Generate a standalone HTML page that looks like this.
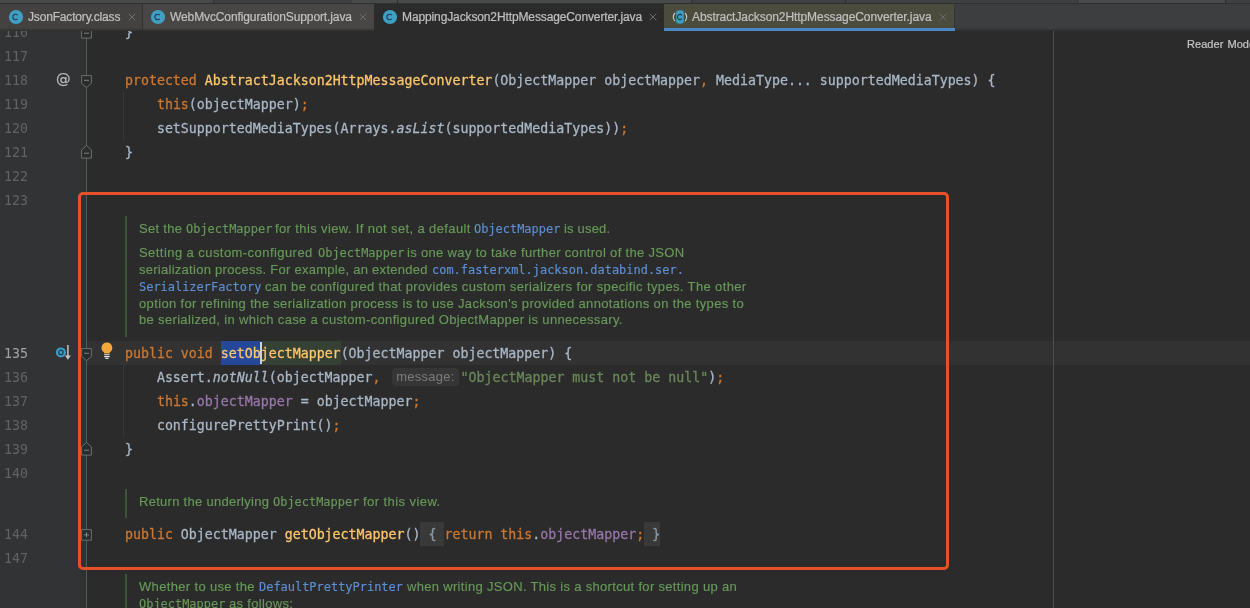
<!DOCTYPE html><html><head><meta charset="utf-8"><title>AbstractJackson2HttpMessageConverter.java</title><style>
*{box-sizing:border-box;margin:0;padding:0}
html,body{width:1250px;height:608px;overflow:hidden;background:#2b2b2b}
body{position:relative;font-family:"Liberation Sans",sans-serif;color:#a9b7c6}
#strip{position:absolute;left:0;top:0;width:1250px;height:4px;background:#3f4042;border-bottom:1px solid #2f3031}
#strip i{position:absolute;top:0;width:1px;height:3px;background:#2d2f30}
#strip b{position:absolute;top:0;height:3px;background:#484949}
#tabs{position:absolute;left:0;top:4px;width:1250px;height:27px;background:#3d3e40;z-index:3}
#tabsh{position:absolute;left:0;top:24px;width:1250px;height:3px;background:linear-gradient(to bottom,rgba(43,43,43,0),rgba(43,43,43,0.85))}
.tab{position:absolute;top:0;height:27px;font-size:12px;line-height:26px;color:#c0c0c0;white-space:pre;-webkit-text-stroke:0.2px}
.tab .ic{position:absolute;top:6px;width:14px;height:14px;overflow:visible}
.tab .tx{position:absolute;top:0}
.tab .x{position:absolute;top:9px;width:8px;height:8px}
#rm{position:absolute;left:1187.3px;top:7px;word-spacing:1px;letter-spacing:0.05px;font-size:11px;line-height:14px;color:#c6c6c6;white-space:pre;-webkit-text-stroke:0.2px}
#ed{position:absolute;left:0;top:30px;width:1250px;height:578px;overflow:hidden;background:#2b2b2b}
#gut{position:absolute;left:0;top:0;width:80px;height:578px;background:#313335}
#gut2{position:absolute;left:80px;top:0;width:6px;height:578px;background:#303231}
#foldline{position:absolute;left:86px;top:0;width:1px;height:578px;background:#555759}
#margin{position:absolute;left:1053px;top:0;width:1px;height:578px;background:#4e4e4e}
#cur{position:absolute;left:87px;top:311px;width:1163px;height:24px;background:#323232}
.ln,.no{position:absolute;height:24px;line-height:24px;white-space:pre;font-family:"DejaVu Sans Mono","Liberation Mono",monospace;font-size:13.288px}
.ln,.no,.d,.tab .tx,#rm,.g{will-change:transform}
.ln{left:93.4px;color:#a9b7c6;-webkit-text-stroke:0.28px}
.no{left:4.4px;color:#606366}
.k{color:#cc7832} .m{color:#ffc66d} .f{color:#9876aa} .s{color:#6a8759} .i{font-style:italic}
.fd{position:relative;color:#8c9aa6}
.fd::before{content:"";position:absolute;left:0;right:0;top:-4.6px;height:24px;background:#393939;z-index:-1}
#hint{display:inline-block;width:72px;height:24px;vertical-align:top;position:relative}
#hint span{position:absolute;left:3px;top:1.7px;width:67px;height:18.3px;border-radius:4px;background:#363636;color:#7b7d7e;font-family:"Liberation Sans",sans-serif;font-size:13px;line-height:18px;padding-left:4.6px;letter-spacing:0.25px;-webkit-text-stroke:0}
.ig{position:absolute;width:1px;background:#373737}
.d{position:absolute;height:17px;line-height:17px;white-space:pre;color:#679959;font-size:13px;-webkit-text-stroke:0.15px}
.dm{font-family:"DejaVu Sans Mono","Liberation Mono",monospace;font-size:11.96px}
.dl{color:#5d8fd4}
.bar{position:absolute;left:125.4px;width:1.3px;background:#3b5537}
.g{position:absolute}
  .at{-webkit-text-stroke:0.25px;font-family:"DejaVu Sans","Liberation Sans",sans-serif;font-size:14.6px;line-height:20px;color:#b9b9b9}
#box{position:absolute;left:78px;top:191.8px;width:871.2px;height:378.6px;border:3.5px solid #e6512b;border-radius:5px}
</style></head><body><div id="strip"><b style="left:0px;width:213px"></b><b style="left:352px;width:339px"></b><b style="left:1077px;width:148px"></b><i style="left:213px"></i><i style="left:397px"></i><i style="left:691px"></i><i style="left:845px"></i><i style="left:1077px"></i><i style="left:1225px"></i></div><div id="tabs"><div class="tab" style="left:0px;width:142px;background:#434241"><svg class="ic" style="left:9px" viewBox="0 0 14 14"><circle cx="7" cy="7" r="7.1" fill="#40a0c3"/><path d="M8.7 5.2A2.75 2.75 0 1 0 8.7 8.8" fill="none" stroke="#1d3d52" stroke-width="1.15"/></svg><span class="tx" style="left:27.6px;letter-spacing:-0.17px">JsonFactory.class</span><svg class="x" style="left:127.5px" viewBox="0 0 8 8"><path d="M0.7 0.7L7.3 7.3M7.3 0.7L0.7 7.3" stroke="#6b6e70" stroke-width="1"/></svg></div><div style="position:absolute;left:142px;top:0;width:1px;height:27px;background:#323232"></div><div class="tab" style="left:143px;width:231px;background:#484746"><svg class="ic" style="left:8px" viewBox="0 0 14 14"><circle cx="7" cy="7" r="7.1" fill="#40a0c3"/><path d="M8.7 5.2A2.75 2.75 0 1 0 8.7 8.8" fill="none" stroke="#1d3d52" stroke-width="1.15"/></svg><span class="tx" style="left:26.900000000000006px;letter-spacing:-0.107px">WebMvcConfigurationSupport.java</span><svg class="x" style="left:216px" viewBox="0 0 8 8"><path d="M0.7 0.7L7.3 7.3M7.3 0.7L0.7 7.3" stroke="#6b6e70" stroke-width="1"/></svg></div><div class="tab" style="left:374px;width:291px;background:#2b2b2b"><svg class="ic" style="left:9.199999999999989px" viewBox="0 0 14 14"><circle cx="7" cy="7" r="7.1" fill="#40a0c3"/><path d="M8.7 5.2A2.75 2.75 0 1 0 8.7 8.8" fill="none" stroke="#1d3d52" stroke-width="1.15"/></svg><span class="tx" style="left:27.600000000000023px;letter-spacing:-0.12px">MappingJackson2HttpMessageConverter.java</span><svg class="x" style="left:275.20000000000005px" viewBox="0 0 8 8"><path d="M0.7 0.7L7.3 7.3M7.3 0.7L0.7 7.3" stroke="#6b6e70" stroke-width="1"/></svg></div><div class="tab" style="left:664px;width:290px;background:#4c4c3e"><svg class="ic" style="left:9.200000000000045px" viewBox="0 0 14 14"><path d="M3.2 1.5A6.7 6.7 0 0 1 10.8 1.5L10.8 12.5A6.7 6.7 0 0 1 3.2 12.5Z" fill="#3d9dc3"/><path d="M1.9 2.9A6.7 6.7 0 0 0 1.9 11.1" fill="none" stroke="#c3cdd1" stroke-width="1.1"/><path d="M12.1 2.9A6.7 6.7 0 0 1 12.1 11.1" fill="none" stroke="#c3cdd1" stroke-width="1.1"/><path d="M9.0 5.3A2.6 2.6 0 1 0 9.0 8.7" fill="none" stroke="#1f3e4b" stroke-width="1.1"/></svg><span class="tx" style="left:28.200000000000045px;letter-spacing:-0.08px">AbstractJackson2HttpMessageConverter.java</span><svg class="x" style="left:275.20000000000005px" viewBox="0 0 8 8"><path d="M0.7 0.7L7.3 7.3M7.3 0.7L0.7 7.3" stroke="#6b6e70" stroke-width="1"/></svg></div><div style="position:absolute;left:954px;top:0;width:1px;height:27px;background:#343536"></div><div id="tabsh"></div><div style="position:absolute;left:664px;top:23.7px;width:291px;height:3.3px;background:#4b88c7"></div></div><div id="ed"><div id="gut"></div><div id="gut2"></div><div id="cur"></div><div id="foldline"></div><div id="margin"></div><div class="ig" style="left:123.3px;top:62px;height:48px"></div><div class="ig" style="left:123.3px;top:335px;height:72px"></div><div class="no" style="top:-8.7px">116</div><div class="ln" style="top:-8.7px">    }</div><div class="no" style="top:15.3px">117</div><div class="no" style="top:39.3px">118</div><div class="ln" style="top:39.3px">    <span class="k">protected</span> <span class="m">AbstractJackson2HttpMessageConverter</span>(ObjectMapper objectMapper<span class="k">,</span> MediaType... supportedMediaTypes) {</div><div class="no" style="top:63.3px">119</div><div class="ln" style="top:63.3px">        <span class="k">this</span>(objectMapper)<span class="k">;</span></div><div class="no" style="top:87.3px">120</div><div class="ln" style="top:87.3px">        setSupportedMediaTypes(Arrays.<span class="i">asList</span>(supportedMediaTypes))<span class="k">;</span></div><div class="no" style="top:111.3px">121</div><div class="ln" style="top:111.3px">    }</div><div class="no" style="top:135.3px">122</div><div class="no" style="top:159.3px">123</div><div style="position:absolute;left:221px;top:311px;width:40px;height:24px;background:#25489a"></div><div style="position:absolute;left:261px;top:311px;width:80px;height:24px;background:#344134"></div><div class="no" style="top:312.3px;color:#a4a3a3">135</div><div class="ln" style="top:312.3px">    <span class="k">public void</span> <span class="m">setObjectMapper</span>(ObjectMapper objectMapper) {</div><div style="position:absolute;left:260.3px;top:312px;width:1.7px;height:22px;background:#d0d0d0"></div><div class="no" style="top:336.3px">136</div><div class="ln" style="top:336.3px">        Assert.<span class="i">notNull</span>(objectMapper<span class="k">,</span> <span id="hint"><span>message:</span></span><span class="s">"ObjectMapper must not be null"</span>)<span class="k">;</span></div><div class="no" style="top:360.3px">137</div><div class="ln" style="top:360.3px">        <span class="k">this</span>.<span class="f">objectMapper</span> = objectMapper<span class="k">;</span></div><div class="no" style="top:384.3px">138</div><div class="ln" style="top:384.3px">        configurePrettyPrint()<span class="k">;</span></div><div class="no" style="top:408.3px">139</div><div class="ln" style="top:408.3px">    }</div><div class="no" style="top:432.3px">140</div><div class="no" style="top:493.3px">144</div><div class="ln" style="top:493.3px">    <span class="k">public</span> ObjectMapper <span class="m">getObjectMapper</span>()<span class="fd"> { </span><span class="k">return this</span>.<span class="f">objectMapper</span><span class="k">;</span><span class="fd"> }</span></div><div class="no" style="top:517.3px">147</div><div class="d" style="left:139.3px;top:189.7px;letter-spacing:0.299px">Set the</div><div class="d dm" style="left:186.2px;top:190.7px">ObjectMapper</div><div class="d" style="left:275.4px;top:189.7px;letter-spacing:0.380px">for this view. If not set, a default</div><div class="d dm dl" style="left:474.0px;top:190.7px">ObjectMapper</div><div class="d" style="left:564.1px;top:189.7px;letter-spacing:0.184px">is used.</div><div class="d" style="left:139.3px;top:213.9px;letter-spacing:0.439px">Setting a custom-configured</div><div class="d dm" style="left:317.5px;top:214.9px">ObjectMapper</div><div class="d" style="left:406.9px;top:213.9px;letter-spacing:0.331px">is one way to take further control of the JSON</div><div class="d" style="left:139.3px;top:230.8px;letter-spacing:0.271px">serialization process. For example, an extended</div><div class="d dm dl" style="left:431.5px;top:231.8px">com.fasterxml.jackson.databind.ser.</div><div class="d dm dl" style="left:139.3px;top:248.6px">SerializerFactory</div><div class="d" style="left:264.6px;top:247.6px;letter-spacing:0.368px">can be configured that provides custom serializers for specific types. The other</div><div class="d" style="left:139.3px;top:264.7px;letter-spacing:0.354px">option for refining the serialization process is to use Jackson&#39;s provided annotations on the types to</div><div class="d" style="left:139.3px;top:281.1px;letter-spacing:0.336px">be serialized, in which case a custom-configured ObjectMapper is unnecessary.</div><div class="d" style="left:139.3px;top:463.1px;letter-spacing:0.284px">Return the underlying</div><div class="d dm" style="left:273.3px;top:464.1px">ObjectMapper</div><div class="d" style="left:362.6px;top:463.1px;letter-spacing:0.436px">for this view.</div><div class="d" style="left:139.3px;top:547.7px;letter-spacing:0.339px">Whether to use the</div><div class="d dm dl" style="left:259.2px;top:548.7px">DefaultPrettyPrinter</div><div class="d" style="left:406.9px;top:547.7px;letter-spacing:0.316px">when writing JSON. This is a shortcut for setting up an</div><div class="d dm" style="left:139.3px;top:565.7px">ObjectMapper</div><div class="d" style="left:228.5px;top:564.7px;letter-spacing:0.320px">as follows:</div><div class="bar" style="top:186px;height:121px"></div><div class="bar" style="top:459px;height:28.5px"></div><div class="bar" style="top:544px;height:40px"></div><svg class="g" style="left:80px;top:-5.5px" width="13" height="14" viewBox="0 0 13 14"><path d="M1.6 13.1H11.4V4.8L6.5 0.5L1.6 4.8Z" fill="#2b2b2b" stroke="#6c6e70" stroke-width="1"/><path d="M4 8.2H9" stroke="#808284" stroke-width="1"/></svg><svg class="g" style="left:80px;top:45px" width="13" height="14" viewBox="0 0 13 14"><path d="M1.6 0.6H11.4V8.4L6.5 12.6L1.6 8.4Z" fill="#2b2b2b" stroke="#6c6e70" stroke-width="1"/><path d="M4 5.3H9" stroke="#808284" stroke-width="1"/></svg><svg class="g" style="left:80px;top:114.5px" width="13" height="14" viewBox="0 0 13 14"><path d="M1.6 13.1H11.4V4.8L6.5 0.5L1.6 4.8Z" fill="#2b2b2b" stroke="#6c6e70" stroke-width="1"/><path d="M4 8.2H9" stroke="#808284" stroke-width="1"/></svg><svg class="g" style="left:80px;top:318px" width="13" height="14" viewBox="0 0 13 14"><path d="M1.6 0.6H11.4V8.4L6.5 12.6L1.6 8.4Z" fill="#2b2b2b" stroke="#6c6e70" stroke-width="1"/><path d="M4 5.3H9" stroke="#808284" stroke-width="1"/></svg><svg class="g" style="left:80px;top:411.5px" width="13" height="14" viewBox="0 0 13 14"><path d="M1.6 13.1H11.4V4.8L6.5 0.5L1.6 4.8Z" fill="#2b2b2b" stroke="#6c6e70" stroke-width="1"/><path d="M4 8.2H9" stroke="#808284" stroke-width="1"/></svg><svg class="g" style="left:80px;top:499px" width="13" height="12" viewBox="0 0 13 12"><path d="M1.6 0.6H11.4V11.2H1.6Z" fill="#2b2b2b" stroke="#6c6e70" stroke-width="1"/><path d="M4 5.9H9M6.5 3.4V8.4" stroke="#808284" stroke-width="1"/></svg><div class="g at" style="left:56.3px;top:39.3px">@</div><svg class="g" style="left:54px;top:313px" width="18" height="19" viewBox="0 0 18 19"><circle cx="6.9" cy="9.4" r="5" fill="#3d9dc3"/><circle cx="6.9" cy="9.4" r="2.2" fill="none" stroke="#1f3e4b" stroke-width="1.2"/><path d="M13.9 2V14" stroke="#c4c4c4" stroke-width="1.5"/><path d="M10.9 12.6H16.9L13.9 16.8Z" fill="#c4c4c4"/></svg><svg class="g" style="left:99px;top:311px" width="16" height="20" viewBox="0 0 16 20"><path d="M7.9 1.6A5.3 5.3 0 0 1 10.9 11.3L10.6 12.6H5.2L4.9 11.3A5.3 5.3 0 0 1 7.9 1.6Z" fill="#f2a83a"/><path d="M5.2 13.7H10.6M5.2 15.6H10.6" stroke="#e6e6e6" stroke-width="1.1"/><path d="M6.4 17.4H9.4" stroke="#e6e6e6" stroke-width="1.1"/></svg><div id="rm">Reader Mode</div></div><div id="box"></div></body></html>
